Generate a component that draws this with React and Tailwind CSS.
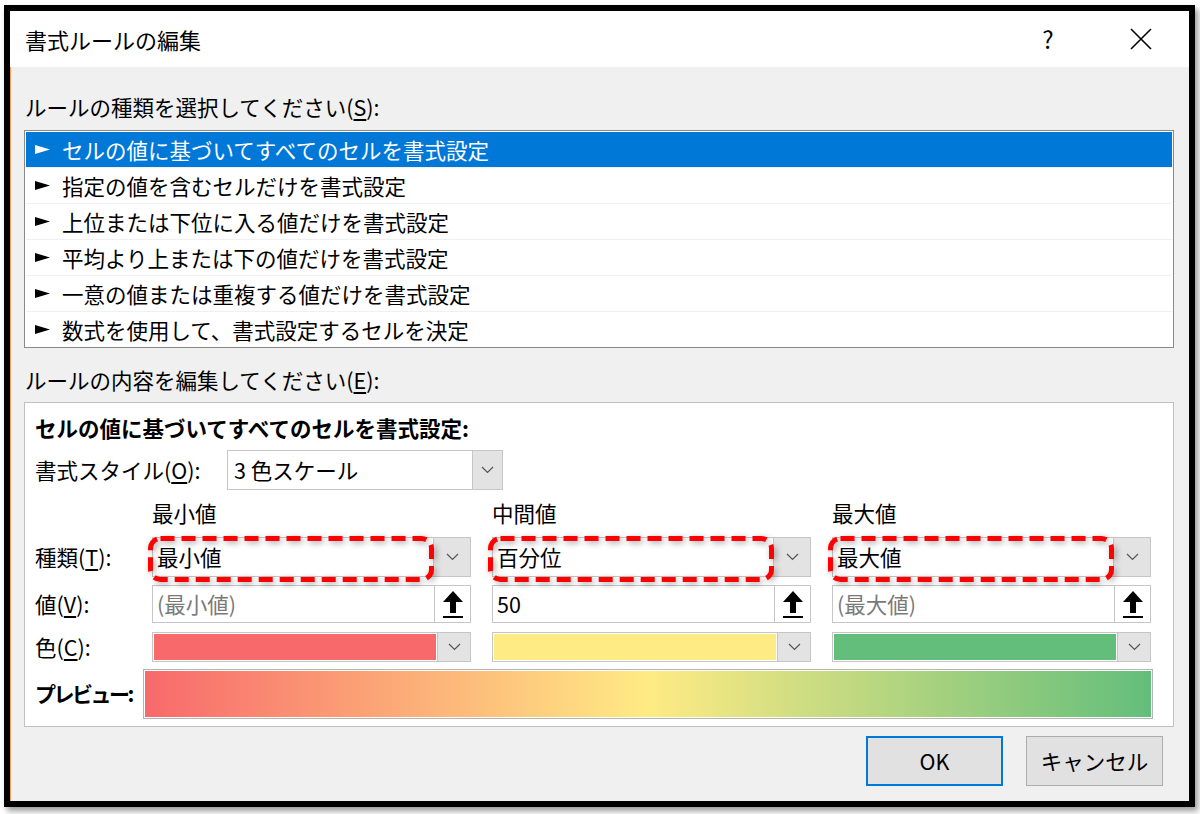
import React from 'react'

const RULES = [
  'セルの値に基づいてすべてのセルを書式設定',
  '指定の値を含むセルだけを書式設定',
  '上位または下位に入る値だけを書式設定',
  '平均より上または下の値だけを書式設定',
  '一意の値または重複する値だけを書式設定',
  '数式を使用して、書式設定するセルを決定',
]

const COLUMNS = [
  { head: '最小値', type: '最小値', value: '(最小値)', placeholder: true, color: 'bg-[#f8696b]' },
  { head: '中間値', type: '百分位', value: '50', placeholder: false, color: 'bg-[#ffeb84]' },
  { head: '最大値', type: '最大値', value: '(最大値)', placeholder: true, color: 'bg-[#63be7b]' },
]

function Chevron() {
  return (
    <svg width="13" height="8" viewBox="0 0 13 8">
      <polyline points="1,1 6.5,6.5 12,1" fill="none" stroke="#555" strokeWidth="1.2" />
    </svg>
  )
}

function ArrowBox({ w = 'w-[37px]' }) {
  return (
    <div className={`${w} h-full shrink-0 bg-[#e3e3e3] border-l border-[#c6c6c6] flex items-center justify-center`}>
      <Chevron />
    </div>
  )
}

function UpArrow() {
  return (
    <svg width="24" height="30" viewBox="0 0 24 30">
      <polygon points="12,2 22,13 15,13 15,24 9,24 9,13 2,13" fill="#000" />
      <rect x="2" y="27" width="20" height="2" fill="#000" />
    </svg>
  )
}

// 赤い点線の注釈枠
function RedMark() {
  return (
    <svg
      className="absolute -left-[5px] -top-[2px] pointer-events-none drop-shadow-[2px_2px_3px_rgba(0,0,0,0.35)]"
      width="286"
      height="46"
      viewBox="0 0 286 46"
    >
      <rect x="2.5" y="2.5" width="281" height="41" rx="10" fill="none" stroke="#ff0000" strokeWidth="5" strokeDasharray="14 7" />
    </svg>
  )
}

function Key({ children, k, tail = '):' }) {
  return (
    <span className="whitespace-nowrap">
      {children}(<span className="underline underline-offset-[3px]">{k}</span>{tail}
    </span>
  )
}

export default function App() {
  return (
    <div className="min-h-screen bg-white pt-[5px] pl-[4px] font-['Noto_Sans_CJK_JP','Liberation_Sans',sans-serif] text-[21.5px] text-black">
      <div className="w-[1191px] h-[802px] border-[6px] border-black shadow-[3px_4px_6px_rgba(0,0,0,0.4)] flex flex-col">
        {/* タイトルバー */}
        <div className="h-[56px] shrink-0 bg-white flex items-center pl-[15px] pr-[17px]">
          <span className="text-[22px] leading-none">書式ルールの編集</span>
          <div className="ml-auto flex items-center gap-[32px]">
            <div className="w-[60px] text-center text-[24px] leading-none">?</div>
            <div className="w-[62px] flex justify-center">
              <svg width="22" height="22" viewBox="0 0 22 22">
                <path d="M1 1 L21 21 M21 1 L1 21" stroke="#000" strokeWidth="1.6" />
              </svg>
            </div>
          </div>
        </div>

        <div className="flex-1 bg-[#f0f0f0] border-l border-[#f0a060] pl-[13px] pr-[15px]">
          <div className="mt-[25px] h-[30px] leading-[30px] pl-[1px]">
            <Key k="S">ルールの種類を選択してください</Key>
          </div>

          <div className="mt-[8px] border border-[#8a8a8a] bg-white pt-[1px] px-[1px]">
            {RULES.map((r, i) => (
              <div
                key={r}
                className={`flex items-center pl-[9px] ${i < RULES.length - 1 ? 'h-[36px] border-b border-[#f0f0f0]' : 'h-[35px]'} ${i === 0 ? 'bg-[#0078d7] text-white border-[#0078d7]' : ''}`}
              >
                <svg width="15" height="9" viewBox="0 0 15 9" className="shrink-0">
                  <polygon points="0,0 15,4.5 0,9" fill={i === 0 ? '#fff' : '#000'} />
                </svg>
                <span className="ml-[12px] leading-none">{r}</span>
              </div>
            ))}
          </div>

          <div className="mt-[17px] h-[30px] leading-[30px] pl-[1px]">
            <Key k="E">ルールの内容を編集してください</Key>
          </div>

          <div className="mt-[7px] border border-[#c0c0c0] bg-white pl-[10px] pr-[20px] pt-[10px] pb-[7px]">
            <div className="h-[30px] leading-[30px] font-bold">セルの値に基づいてすべてのセルを書式設定:</div>

            <div className="mt-[7px] flex items-center h-[40px]">
              <div className="w-[192px]">
                <Key k="O">書式スタイル</Key>
              </div>
              <div className="w-[276px] h-[40px] border border-[#c6c6c6] bg-white flex">
                <div className="flex-1 pl-[6px] flex items-center">3 色スケール</div>
                <ArrowBox w="w-[30px]" />
              </div>
            </div>

            <div className="mt-[8px] flex h-[30px] items-center">
              <div className="w-[117px]" />
              <div className="flex gap-[21px]">
                {COLUMNS.map((c) => (
                  <div key={c.head} className="w-[319px] leading-[30px]">{c.head}</div>
                ))}
              </div>
            </div>

            <div className="mt-[9px] flex h-[40px] items-center">
              <div className="w-[117px]">
                <Key k="T">種類</Key>
              </div>
              <div className="flex gap-[21px]">
                {COLUMNS.map((c) => (
                  <div key={c.head} className="relative w-[319px] h-[40px] border border-[#c6c6c6] bg-white flex">
                    <div className="flex-1 pl-[4px] flex items-center">{c.type}</div>
                    <ArrowBox />
                    <RedMark />
                  </div>
                ))}
              </div>
            </div>

            <div className="mt-[8px] flex h-[38px] items-center">
              <div className="w-[117px]">
                <Key k="V">値</Key>
              </div>
              <div className="flex gap-[21px]">
                {COLUMNS.map((c) => (
                  <div key={c.head} className="w-[319px] h-[38px] border border-[#c6c6c6] bg-white flex">
                    <div className={`flex-1 pl-[4px] flex items-center ${c.placeholder ? 'text-[#7a7a7a]' : ''}`}>{c.value}</div>
                    <div className="w-[36px] h-full border-l border-[#c6c6c6] flex items-center justify-center">
                      <UpArrow />
                    </div>
                  </div>
                ))}
              </div>
            </div>

            <div className="mt-[9px] flex h-[30px] items-center">
              <div className="w-[117px]">
                <Key k="C">色</Key>
              </div>
              <div className="flex gap-[21px]">
                {COLUMNS.map((c) => (
                  <div key={c.head} className="w-[319px] h-[30px] border border-[#c6c6c6] bg-white flex">
                    <div className="flex-1 p-[1px]">
                      <div className={`h-full ${c.color}`} />
                    </div>
                    <ArrowBox w="w-[33px]" />
                  </div>
                ))}
              </div>
            </div>

            <div className="mt-[7px] flex h-[50px] items-center">
              <div className="w-[108px] whitespace-nowrap font-bold text-[21px] tracking-[-2.5px]">プレビュー:</div>
              <div className="flex-1 h-[50px] border border-[#b4b4b4] bg-white p-[1px]">
                <div className="h-full bg-[linear-gradient(to_right,#f8696b,#ffeb84,#63be7b)]" />
              </div>
            </div>
          </div>

          <div className="mt-[9px] flex justify-end gap-[23px] pr-[11px]">
            <button className="w-[137px] h-[50px] border-2 border-[#0078d7] bg-[#e1e1e1]">OK</button>
            <button className="w-[137px] h-[50px] border border-[#adadad] bg-[#e1e1e1]">キャンセル</button>
          </div>
        </div>
      </div>
    </div>
  )
}
